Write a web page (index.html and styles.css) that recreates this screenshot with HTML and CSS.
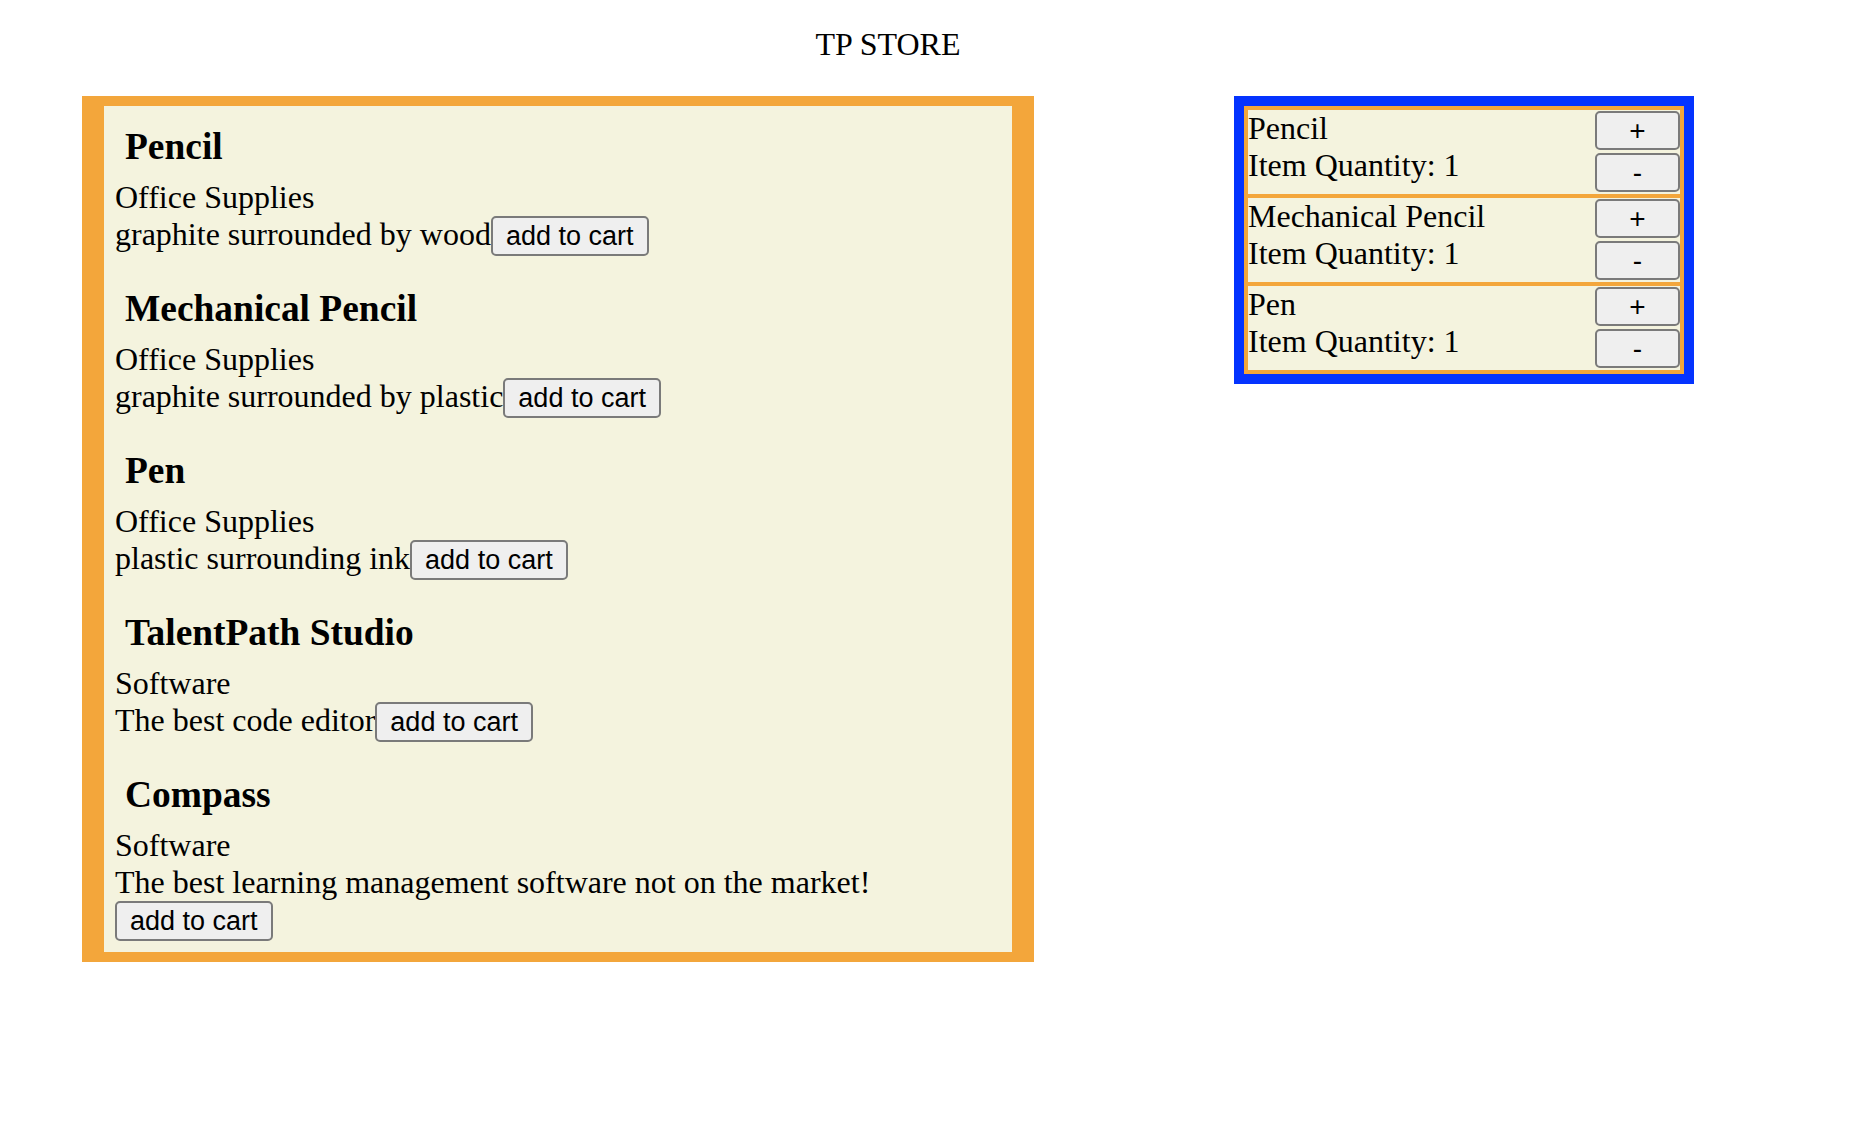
FILE: index.html
```html
<!DOCTYPE html>
<html>
<head>
<meta charset="utf-8">
<title>TP STORE</title>
<link rel="stylesheet" href="styles.css">
</head>
<body>
<div class="page">
  <div class="title">TP STORE</div>
  <div class="main">
    <div class="products">
      <div class="products-inner">
        <div class="item">
          <h3 class="item-name">Pencil</h3>
          <div class="item-cat">Office Supplies</div>
          <div class="item-desc">graphite surrounded by wood<button class="btn">add to cart</button></div>
        </div>
        <div class="item">
          <h3 class="item-name">Mechanical Pencil</h3>
          <div class="item-cat">Office Supplies</div>
          <div class="item-desc">graphite surrounded by plastic<button class="btn">add to cart</button></div>
        </div>
        <div class="item">
          <h3 class="item-name">Pen</h3>
          <div class="item-cat">Office Supplies</div>
          <div class="item-desc">plastic surrounding ink<button class="btn">add to cart</button></div>
        </div>
        <div class="item">
          <h3 class="item-name">TalentPath Studio</h3>
          <div class="item-cat">Software</div>
          <div class="item-desc">The best code editor<button class="btn">add to cart</button></div>
        </div>
        <div class="item">
          <h3 class="item-name">Compass</h3>
          <div class="item-cat">Software</div>
          <div class="item-desc">The best learning management software not on the market!<button class="btn">add to cart</button></div>
        </div>
      </div>
    </div>
    <div class="cart">
      <div class="cart-item">
        <div class="cart-text">
          <div>Pencil</div>
          <div>Item Quantity: 1</div>
        </div>
        <div class="cart-btns">
          <button class="btn qty-btn">+</button>
          <button class="btn qty-btn">-</button>
        </div>
      </div>
      <div class="cart-item">
        <div class="cart-text">
          <div>Mechanical Pencil</div>
          <div>Item Quantity: 1</div>
        </div>
        <div class="cart-btns">
          <button class="btn qty-btn">+</button>
          <button class="btn qty-btn">-</button>
        </div>
      </div>
      <div class="cart-item">
        <div class="cart-text">
          <div>Pen</div>
          <div>Item Quantity: 1</div>
        </div>
        <div class="cart-btns">
          <button class="btn qty-btn">+</button>
          <button class="btn qty-btn">-</button>
        </div>
      </div>
    </div>
  </div>
</div>
</body>
</html>
```
FILE: styles.css
```css
html, body {
  margin: 0;
  padding: 0;
  background: #ffffff;
}

body {
  font-family: "Liberation Serif", "Times New Roman", serif;
  font-size: 32px;
  line-height: 37px;
  color: #000000;
}

.page {
  padding: 26px 156px 0 82px;
}

.title {
  text-align: center;
  font-size: 32px;
  line-height: 37px;
  margin-bottom: 33px;
}

.main {
  display: flex;
  justify-content: space-between;
  align-items: flex-start;
}

.products {
  box-sizing: border-box;
  width: 952px;
  background: #f3a63b;
  padding: 10px 22px;
}

.products-inner {
  background: #f4f3de;
  padding: 19px 11px 11px;
  display: flex;
  flex-direction: column;
  gap: 31px;
}

.item-name {
  margin: 0 0 11px;
  padding-left: 10px;
  font-size: 37.44px;
  line-height: 43px;
  font-weight: bold;
}

.item-cat,
.item-desc {
  line-height: 37px;
}

.btn {
  font-family: "Liberation Sans", Arial, sans-serif;
  font-size: 27px;
  line-height: 30px;
  color: #000000;
  background: #efefef;
  border: 2px solid #7a7a7a;
  border-radius: 5px;
  padding: 3px 13px;
  margin: 0;
}

.cart {
  box-sizing: border-box;
  width: 460px;
  border: 10px solid #0433ff;
  background: #f3a63b;
  padding: 4px;
  display: flex;
  flex-direction: column;
  gap: 4px;
}

.cart-item {
  box-sizing: border-box;
  height: 84px;
  background: #f4f3de;
  display: flex;
  justify-content: space-between;
  align-items: flex-start;
}

.cart-text {
  line-height: 37px;
}

.cart-btns {
  display: flex;
  flex-direction: column;
  gap: 3px;
  padding-top: 1px;
}

.qty-btn {
  box-sizing: border-box;
  width: 85px;
  height: 39px;
  padding: 0;
  line-height: 30px;
  font-size: 28px;
}
```
